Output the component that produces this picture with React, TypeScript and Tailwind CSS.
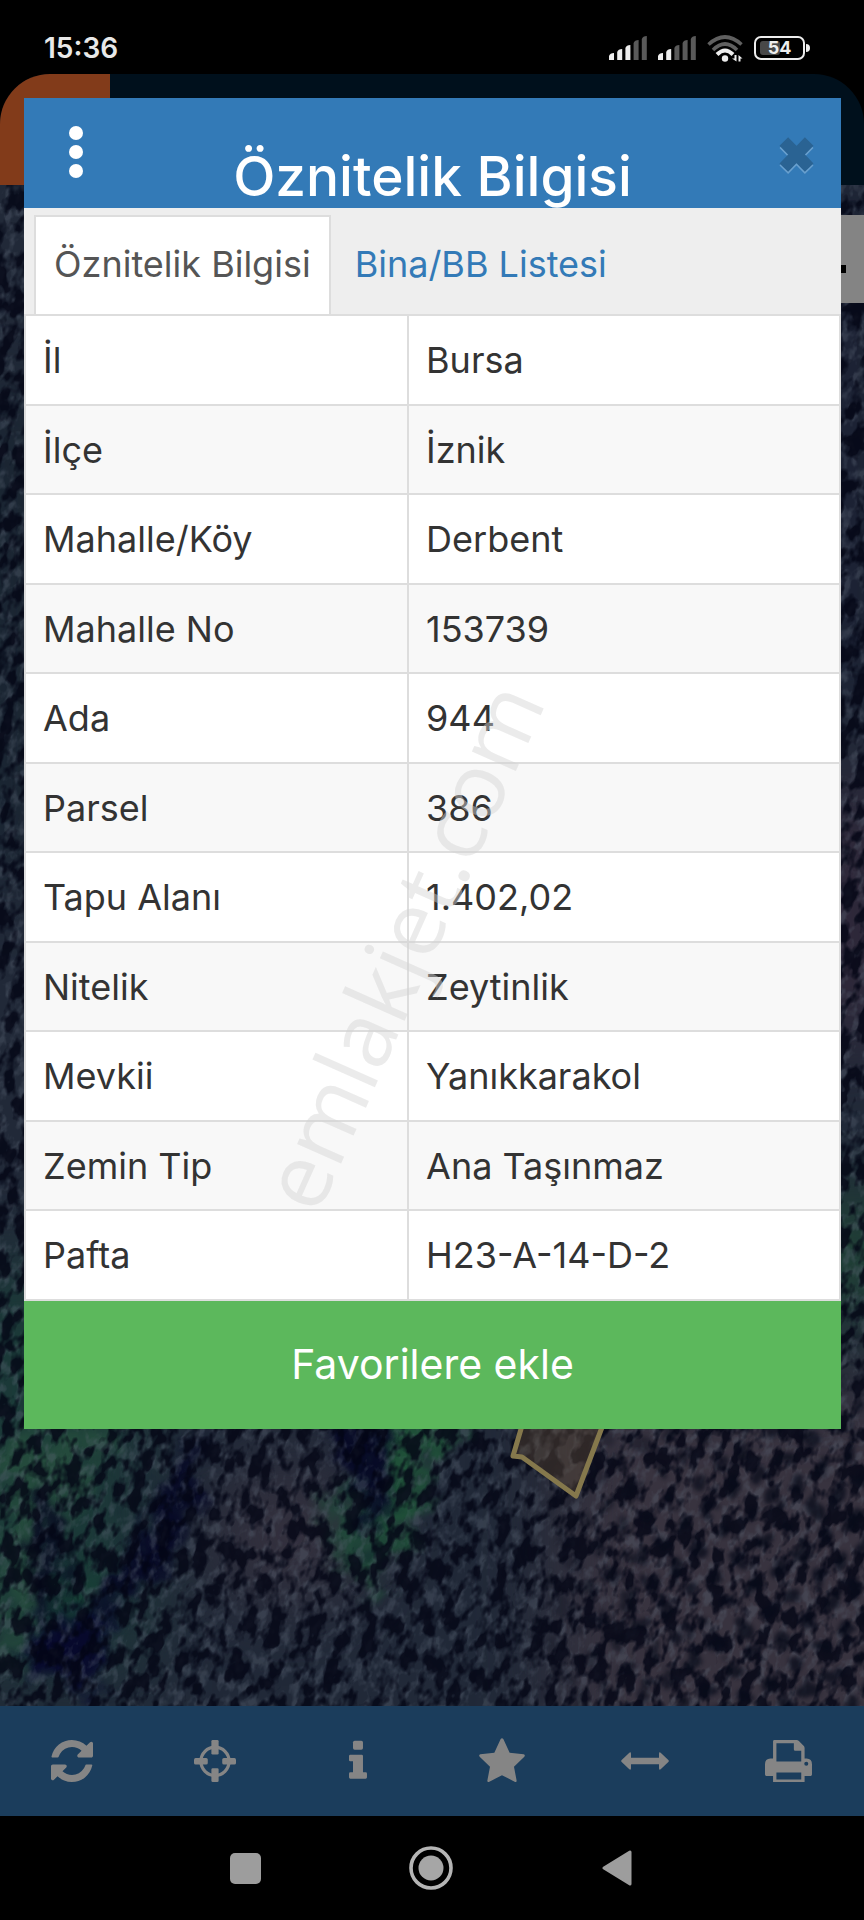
import { useState } from 'react';
import type { ReactNode } from 'react';

const rows: [string, string][] = [
  ['İl', 'Bursa'],
  ['İlçe', 'İznik'],
  ['Mahalle/Köy', 'Derbent'],
  ['Mahalle No', '153739'],
  ['Ada', '944'],
  ['Parsel', '386'],
  ['Tapu Alanı', '1.402,02'],
  ['Nitelik', 'Zeytinlik'],
  ['Mevkii', 'Yanıkkarakol'],
  ['Zemin Tip', 'Ana Taşınmaz'],
  ['Pafta', 'H23-A-14-D-2'],
];

function Signal({ level }: { level: number }) {
  const tops = [17, 13, 9, 4, 0];
  return (
    <svg viewBox="0 0 38 24" className="h-6 w-[38px]" aria-hidden="true">
      {tops.map((t, i) => (
        <path
          key={t}
          d={`M${i * 8.2} 24V${t + 3}Q${i * 8.2 + 1} ${t} ${i * 8.2 + 5} ${t}V24Z`}
          fill={i < level ? '#ededed' : '#5a5a5a'}
        />
      ))}
    </svg>
  );
}

function Wifi() {
  return (
    <svg viewBox="0 0 36 27" className="h-[27px] w-9" fill="none" strokeWidth="3.6" aria-hidden="true">
      <path d="M1.5 9.5Q18-5.500 34.500 9.500" stroke="#606060" />
      <path d="M6 15Q18 3 30 15" stroke="#606060" />
      <path d="M10 19.500Q18 11.500 26 19.500" stroke="#ededed" strokeWidth="4" />
      <circle cx="18" cy="23.500" r="3.200" fill="#ededed" />
      <path d="M25 23.500h2.500v-3.500h2v6.500zM31.500 26.500v-6.500l4 3.500h-2v3z" fill="#ededed" />
    </svg>
  );
}

function Battery() {
  return (
    <div className="flex items-center">
      <div className="relative flex h-6 w-[51px] items-center justify-center rounded-[7px] border-2 border-[#ededed]">
        <span className="absolute inset-y-[3px] left-1 w-5 rounded-[3px] bg-[#484848]" />
        <span className="relative text-[18px] leading-none font-bold text-[#ededed]">54</span>
      </div>
      <span className="ml-px h-2 w-1 rounded-r-full bg-[#ededed]" />
    </div>
  );
}

function StatusBar() {
  return (
    <div className="flex h-[74px] items-center justify-between bg-black pt-[22px] pr-[54px] pl-11">
      <span className="text-[28px] leading-none font-semibold text-[#e8e8e8]">15:36</span>
      <div className="flex items-center gap-[11px]">
        <Signal level={3} />
        <Signal level={2} />
        <Wifi />
        <Battery />
      </div>
    </div>
  );
}

function SatelliteMap() {
  return (
    <svg
      viewBox="0 0 864 1521"
      preserveAspectRatio="xMidYMax slice"
      className="absolute inset-0 h-full w-full"
      aria-hidden="true"
    >
      <defs>
        <filter id="soft" x="-50%" y="-50%" width="200%" height="200%" colorInterpolationFilters="sRGB">
          <feGaussianBlur in="SourceGraphic" stdDeviation="9" result="b" />
          <feTurbulence type="fractalNoise" baseFrequency="0.03" numOctaves="3" seed="4" result="n" />
          <feDisplacementMap in="b" in2="n" scale="60" xChannelSelector="R" yChannelSelector="G" />
        </filter>
        <filter id="blur" x="-50%" y="-50%" width="200%" height="200%" colorInterpolationFilters="sRGB">
          <feGaussianBlur stdDeviation="40" />
        </filter>
        <filter id="trees" x="0" y="0" width="100%" height="100%" colorInterpolationFilters="sRGB">
          <feTurbulence type="fractalNoise" baseFrequency="0.075 0.045" numOctaves="3" seed="11" />
          <feColorMatrix values="0 0 0 0 0.01  0 0 0 0 0.02  0 0 0 0 0.08  6 0 0 0 -2.7" />
        </filter>
        <filter id="grain" x="0" y="0" width="100%" height="100%" colorInterpolationFilters="sRGB">
          <feTurbulence type="fractalNoise" baseFrequency="0.11 0.07" numOctaves="3" seed="23" />
          <feColorMatrix values="0 0 0 0 0.36  0 0 0 0 0.4  0 0 0 0 0.46  0 4 0 0 -1.9" />
        </filter>
        <filter id="rough" x="0" y="0" width="100%" height="100%" colorInterpolationFilters="sRGB">
          <feTurbulence type="fractalNoise" baseFrequency="0.05" numOctaves="2" seed="8" result="n" />
          <feDisplacementMap
            in="SourceGraphic"
            in2="n"
            scale="26"
            xChannelSelector="R"
            yChannelSelector="G"
            result="d"
          />
          <feGaussianBlur in="d" stdDeviation="2" />
        </filter>
        <pattern id="grove" width="40" height="44" patternUnits="userSpaceOnUse" patternTransform="rotate(14)">
          <ellipse cx="10" cy="11" rx="8" ry="9" fill="#060a19" />
          <ellipse cx="30" cy="33" rx="8" ry="9" fill="#070b19" />
        </pattern>
        <radialGradient id="fade" gradientUnits="userSpaceOnUse" cx="830" cy="1420" r="330">
          <stop offset="0.5" stopColor="#fff" />
          <stop offset="1" stopColor="#000" />
        </radialGradient>
        <mask id="groveMask" maskUnits="userSpaceOnUse" x="400" y="1000" width="500" height="521">
          <rect x="400" y="1000" width="500" height="521" fill="url(#fade)" />
        </mask>
      </defs>
      <rect width="864" height="1521" fill="#212938" />
      <g filter="url(#blur)">
        <rect x="560" y="1200" width="400" height="400" fill="#38333f" />
        <rect x="-60" y="1080" width="200" height="400" fill="#1b3a38" />
        <rect x="810" y="0" width="80" height="520" fill="#1a2032" />
        <rect x="810" y="600" width="80" height="260" fill="#33283a" />
        <rect x="810" y="1010" width="80" height="120" fill="#1f4a35" />
        <ellipse cx="290" cy="1350" rx="80" ry="60" fill="#37323f" />
        <rect x="-30" y="200" width="60" height="500" fill="#16232e" />
      </g>
      <g filter="url(#soft)">
        <path d="M400 1220L460 1220L410 1340L375 1420L360 1330Z" fill="#1f5038" />
        <path d="M0 1250L110 1240L60 1360L20 1480H0Z" fill="#244a3c" />
        <path d="M330 1310L360 1300L365 1380L340 1390Z" fill="#204a3a" />
        <path d="M60 1400L100 1380L80 1470L50 1470Z" fill="#174036" />
        <path d="M170 1290L215 1230L180 1370L110 1430L80 1500L85 1440Z" fill="#070a26" />
        <path d="M330 1230L390 1230L375 1380L350 1300Z" fill="#070a26" />
        <path d="M20 1440L110 1430L100 1500L30 1490Z" fill="#07092c" />
        <path d="M35 1330L60 1290L60 1440L35 1420Z" fill="#080b22" />
      </g>
      <g transform="rotate(18 432 1000)">
        <rect x="-500" y="-300" width="1900" height="2400" filter="url(#grain)" opacity="0.35" />
        <rect x="-500" y="-300" width="1900" height="2400" filter="url(#trees)" opacity="0.8" />
      </g>
      <g mask="url(#groveMask)">
        <rect x="400" y="1000" width="500" height="560" fill="url(#grove)" filter="url(#rough)" opacity="0.7" />
      </g>
      <path
        d="M540 1180L513 1271L522 1272L576 1311L618 1200Z"
        fill="#5c4a38"
        fillOpacity="0.45"
        stroke="#85784c"
        strokeWidth="5"
        strokeLinejoin="round"
      />
    </svg>
  );
}

function Backdrop() {
  return (
    <div className="absolute inset-0 flex flex-col overflow-hidden rounded-t-[50px]">
      <div className="flex h-[111px] shrink-0 bg-[#00101c]">
        <div className="w-[110px] bg-[#823b1a]" />
      </div>
      <div className="relative flex-1">
        <SatelliteMap />
        <div className="absolute top-[30px] right-0 flex h-[88px] w-10 items-center bg-[#848484]">
          <span className="mt-5 ml-4 h-2 w-1.5 bg-black" />
        </div>
      </div>
    </div>
  );
}

function AttributeDialog() {
  const [tab, setTab] = useState(0);
  return (
    <section aria-label="Öznitelik Bilgisi" className="relative mt-6 mr-[23px] mb-[277px] ml-6 flex flex-col bg-white">
      <header className="grid h-[110px] grid-cols-[1fr_auto_1fr] overflow-hidden bg-[#337ab7]">
        <button type="button" aria-label="Menü" className="mt-7 ml-[45px] flex w-3.5 flex-col gap-[5px] self-start">
          <span className="size-3.5 rounded-full bg-white" />
          <span className="size-3.5 rounded-full bg-white" />
          <span className="size-3.5 rounded-full bg-white" />
        </button>
        <h1 className="self-end text-[55px] leading-[64px] font-medium text-white">Öznitelik Bilgisi</h1>
        <button type="button" aria-label="Kapat" className="mt-[38px] mr-[26px] self-start justify-self-end">
          <svg viewBox="0 0 37 40" className="h-10 w-[37px]" aria-hidden="true">
            <g fill="none" strokeWidth="12" strokeLinecap="square">
              <path d="M10 12L27 29.500M27 12L10 29.500" stroke="#69a0cf" />
              <path d="M10 9.800L27 27.300M27 9.800L10 27.300" stroke="#2a6393" />
            </g>
          </svg>
        </button>
      </header>

      <div role="tablist" className="flex h-[106px] items-end bg-[#eeeeee] pl-2.5 text-[36px]">
        <button
          type="button"
          role="tab"
          aria-selected={tab === 0}
          onClick={() => setTab(0)}
          className="h-[99px] border-2 border-b-0 border-[#dddddd] bg-white px-[18px] pb-1 text-[#555555]"
        >
          Öznitelik Bilgisi
        </button>
        <button
          type="button"
          role="tab"
          aria-selected={tab === 1}
          onClick={() => setTab(1)}
          className="h-[99px] px-6 pb-0.5 text-[#337ab7]"
        >
          Bina/BB Listesi
        </button>
      </div>

      <table className="w-full table-fixed border-collapse border-2 border-[#dddddd] text-[36px] leading-none text-[#333333]">
        <tbody>
          {rows.map(([label, value]) => (
            <tr key={label} className="h-[90px] even:h-[89px] even:bg-[#f8f8f8]">
              <th scope="row" className="w-[47%] border-2 border-[#dddddd] pl-[17px] text-left font-normal">
                {label}
              </th>
              <td className="border-2 border-[#dddddd] pl-[17px]">{value}</td>
            </tr>
          ))}
        </tbody>
      </table>

      <button type="button" className="h-32 bg-[#5cb85c] text-[41px] text-white">
        Favorilere ekle
      </button>

      <div
        aria-hidden="true"
        className="pointer-events-none absolute top-[847px] left-[376px] -translate-1/2 -rotate-66 font-['Open_Sans',sans-serif] text-[90px] leading-none text-[#d2d2d2]/45"
      >
        emlakjet.com
      </div>
    </section>
  );
}

const tools: { label: string; width: string; icon: ReactNode }[] = [
  {
    label: 'Yenile',
    width: 'w-[42px]',
    icon: (
      <svg viewBox="0 128 1536 1536" fill="currentColor">
        <path d="M1511 1056q0 5-1 7-64 268-268 434.500t-478 166.500q-146 0-282.500-55t-243.500-157l-129 129q-19 19-45 19t-45-19-19-45v-448q0-26 19-45t45-19h448q26 0 45 19t19 45-19 45l-137 137q71 66 161 102t187 36q134 0 250-65t186-179q11-17 53-117 8-23 30-23h192q13 0 22.500 9.500t9.500 22.500zm25-800v448q0 26-19 45t-45 19h-448q-26 0-45-19t-19-45 19-45l138-138q-148-137-349-137-134 0-250 65t-186 179q-11 17-53 117-8 23-30 23h-199q-13 0-22.500-9.500t-9.500-22.500v-7q65-268 270-434.500t480-166.500q146 0 284 55.500t245 156.500l130-129q19-19 45-19t45 19 19 45z" />
      </svg>
    ),
  },
  {
    label: 'Konum',
    width: 'w-[42px]',
    icon: (
      <svg viewBox="0 0 128 128" fill="currentColor">
        <circle cx="64" cy="65" r="43" fill="none" stroke="currentColor" strokeWidth="10" />
        <rect x="53" y="0" width="22" height="44" rx="4" />
        <rect x="53" y="86" width="22" height="42" rx="4" />
        <rect x="0" y="55" width="42" height="20" rx="5" />
        <rect x="86" y="55" width="42" height="20" rx="5" />
      </svg>
    ),
  },
  {
    label: 'Bilgi',
    width: 'w-[18px]',
    icon: (
      <svg viewBox="0 0 54 128" fill="currentColor">
        <rect x="12" y="2" width="30" height="27" rx="5" />
        <path d="M4 44H38Q42 44 42 48V97H50Q54 97 54 101V112Q54 116 50 116H4Q0 116 0 112V101Q0 97 4 97H12V64H4Q0 64 0 60V48Q0 44 4 44Z" />
      </svg>
    ),
  },
  {
    label: 'Favoriler',
    width: 'w-[46px]',
    icon: (
      <svg viewBox="0 0 138 140" fill="currentColor">
        <path d="M65 3Q69-2 73 3L92 44L134 49Q140 51 136 56L105 86L113 128Q113 134 107 131L69 112L31 131Q25 134 25 128L33 86L2 56Q-2 51 4 49L46 44Z" />
      </svg>
    ),
  },
  {
    label: 'Ölç',
    width: 'w-12',
    icon: (
      <svg viewBox="0 0 144 54" fill="currentColor">
        <path d="M2 24L25 2Q30-1 30 5V17H114V5Q114-1 119 2L142 24Q145 27 142 30L119 52Q114 55 114 49V37H30V49Q30 55 25 52L2 30Q-1 27 2 24Z" />
      </svg>
    ),
  },
  {
    label: 'Yazdır',
    width: 'w-[47px]',
    icon: (
      <svg viewBox="0 0 140 128" fill="currentColor">
        <path
          fillRule="evenodd"
          d="M28 0H94Q98 0 101 3L115 17Q118 20 118 24V55H124Q140 56 140 72V103Q140 107 136 107H118V124Q118 128 114 128H28Q24 128 24 124V107H4Q0 107 0 103V72Q0 56 16 55H24V4Q24 0 28 0ZM34 10V64H108V32H90Q86 32 86 28V10ZM34 97V118H108V97ZM123 65A6 6 0 1 0 123 77A6 6 0 1 0 123 65Z"
        />
      </svg>
    ),
  },
];

export default function App() {
  return (
    <div className="flex min-h-screen flex-col bg-black font-['Inter',sans-serif]">
      <StatusBar />
      <main className="relative flex-1">
        <Backdrop />
        <AttributeDialog />
      </main>
      <nav className="grid h-[110px] grid-cols-6 bg-[#1b3d5c] pr-1 text-[#858585]">
        {tools.map((t) => (
          <button key={t.label} type="button" aria-label={t.label} className="flex items-center justify-center">
            <span className={t.width}>{t.icon}</span>
          </button>
        ))}
      </nav>
      <div className="flex h-[104px] items-center justify-center gap-[142px] bg-black pr-0.5 text-[#9d9d9d]">
        <button type="button" aria-label="Son uygulamalar" className="flex w-11 justify-center">
          <span className="size-[31px] rounded-[5px] bg-[#9d9d9d]" />
        </button>
        <button type="button" aria-label="Ana ekran">
          <svg viewBox="0 0 44 44" className="size-11">
            <circle cx="22" cy="22" r="20" fill="none" stroke="#b5b5b5" strokeWidth="3.600" />
            <circle cx="22" cy="22" r="12.500" fill="#a6a6a6" />
          </svg>
        </button>
        <button type="button" aria-label="Geri" className="flex w-11 justify-center">
          <svg viewBox="0 0 30 36" className="h-9 w-[30px]">
            <path d="M2 18L28 2V34Z" fill="#9d9d9d" stroke="#9d9d9d" strokeWidth="3" strokeLinejoin="round" />
          </svg>
        </button>
      </div>
    </div>
  );
}
